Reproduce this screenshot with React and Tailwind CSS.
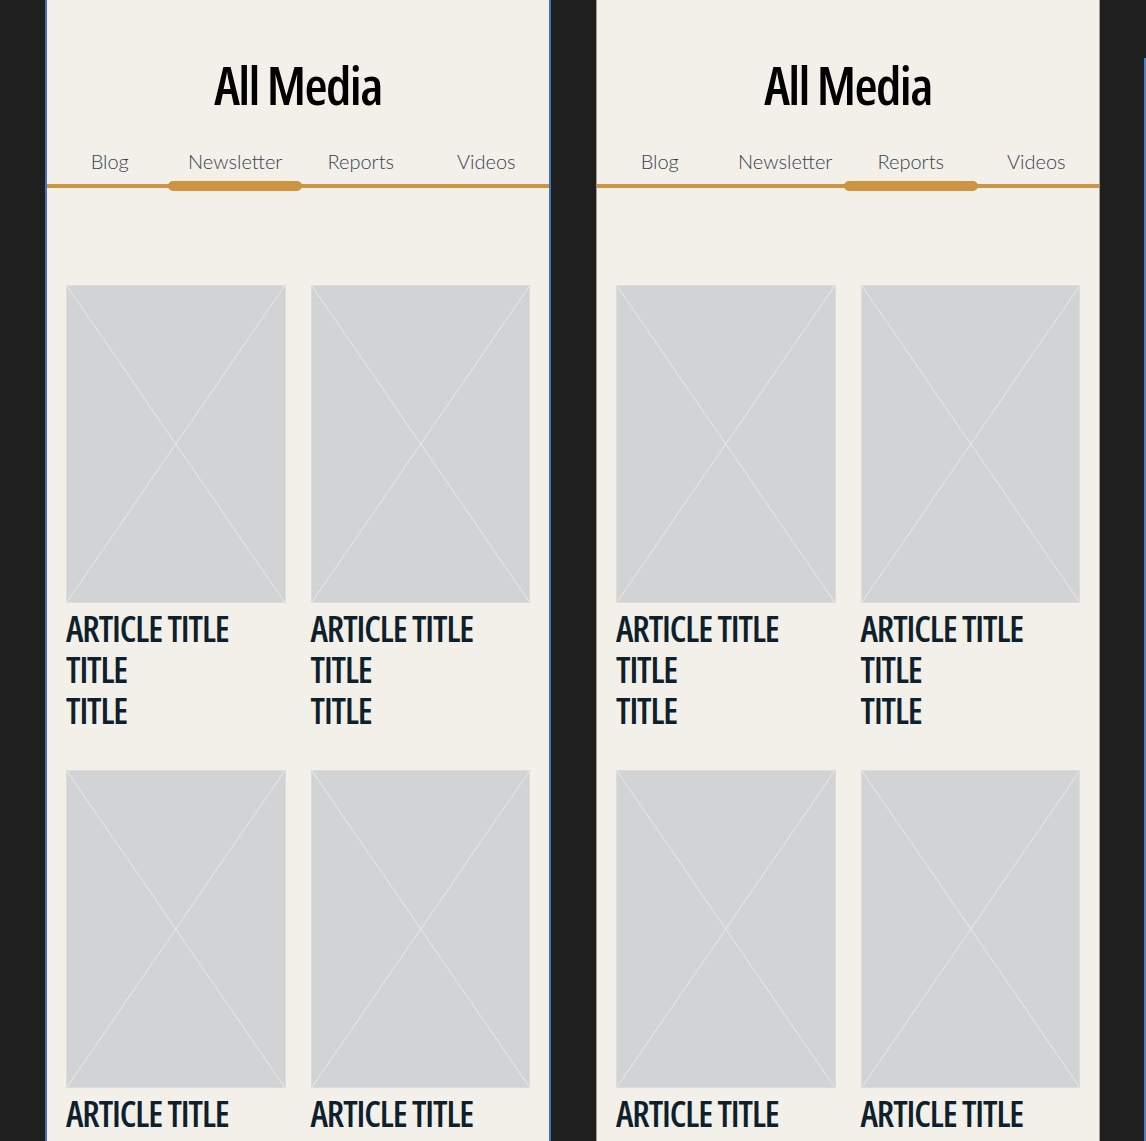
const tabs = ['Blog', 'Newsletter', 'Reports', 'Videos'];

function Placeholder() {
  return (
    <div className="relative h-[318px] w-full shrink-0 border border-[#dcdcdc] bg-[#d2d3d5]">
      <svg className="absolute inset-0 h-full w-full" viewBox="0 0 100 100" preserveAspectRatio="none">
        <line x1="0" y1="0" x2="100" y2="100" stroke="#e9e9e9" strokeWidth="1" vectorEffect="non-scaling-stroke" />
        <line x1="100" y1="0" x2="0" y2="100" stroke="#e9e9e9" strokeWidth="1" vectorEffect="non-scaling-stroke" />
      </svg>
    </div>
  );
}

function Card({ lines }) {
  return (
    <div className="flex flex-col">
      <Placeholder />
      <div className="mt-[5px] shrink-0 font-['Open_Sans',sans-serif] text-[36px] font-[650] leading-[41px] tracking-[-1.1px] text-[#0d202c] [font-stretch:75%]">
        {lines.map((l, i) => (
          <div key={i}>{l}</div>
        ))}
      </div>
    </div>
  );
}

function Panel({ active, border }) {
  const full = ['ARTICLE TITLE', 'TITLE', 'TITLE'];
  return (
    <div className={`flex h-full shrink-0 flex-col overflow-hidden bg-[#f3f0ea] ${border}`}>
      <h1 className="shrink-0 pt-[55px] text-center font-['Open_Sans',sans-serif] text-[53px] font-semibold leading-[60px] tracking-[-1.6px] text-black [font-stretch:75%]">
        All Media
      </h1>
      <div className="mt-[34px] grid shrink-0 grid-cols-4 font-['Lato',sans-serif] text-[20px] font-light leading-[24px] text-[#33434e]">
        {tabs.map((t) => (
          <div key={t} className="text-center">
            {t}
          </div>
        ))}
      </div>
      <div className="relative mt-[11px] h-[4px] shrink-0 bg-[#cd9442]">
        <div className="absolute inset-x-0 top-[-3px] grid grid-cols-4">
          {tabs.map((t) => (
            <div key={t} className="flex justify-center">
              {t === active ? <div className="h-[10px] w-[134px] shrink-0 rounded-[5px] bg-[#cd9442]" /> : null}
            </div>
          ))}
        </div>
      </div>
      <div className="mt-[97px] grid shrink-0 grid-cols-2 gap-x-[25px] gap-y-[39px] px-[19px]">
        <Card lines={full} />
        <Card lines={full} />
        <Card lines={full} />
        <Card lines={full} />
      </div>
    </div>
  );
}

export default function App() {
  return (
    <div className="flex h-[1141px] w-[1146px] overflow-hidden bg-[#1f1f1f]">
      <div className="w-[45px] shrink-0" />
      <div className="h-full w-[506px] shrink-0">
        <Panel active="Newsletter" border="border-x-2 border-[#4173b6]" />
      </div>
      <div className="w-[45px] shrink-0" />
      <div className="h-full w-[504px] shrink-0">
        <Panel active="Reports" border="border-x border-[#9c9a96]" />
      </div>
      <div className="w-[44px] shrink-0" />
      <div className="mt-[58px] w-[2px] shrink-0 bg-[#4a80c8]" />
    </div>
  );
}
